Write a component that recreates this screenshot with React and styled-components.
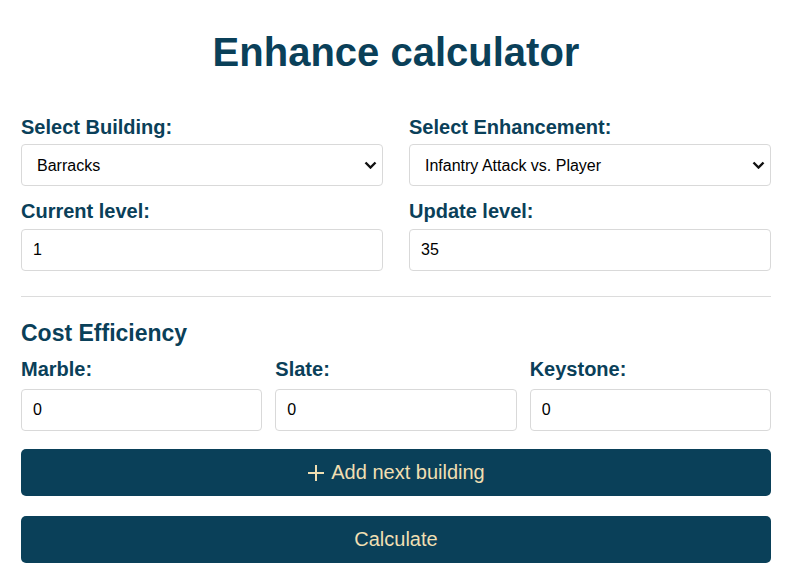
import React from 'react';
import styled, { createGlobalStyle } from 'styled-components';

const GlobalStyle = createGlobalStyle`
  body {
    margin: 0;
    background: #ffffff;
    font-family: "Liberation Sans", Arial, sans-serif;
  }
`;

const chevron = encodeURIComponent(
  '<svg xmlns="http://www.w3.org/2000/svg" width="13" height="8" viewBox="0 0 13 8"><path d="M1.5 1.5l5 5 5-5" fill="none" stroke="#111" stroke-width="2.4"/></svg>'
);

const Page = styled.div`
  padding: 0 18px 0 21px;
`;

const Title = styled.h1`
  margin: 29px 0 41px;
  line-height: 46px;
  text-align: center;
  font-size: 40px;
  font-weight: bold;
  color: #0a4059;
`;

const Grid = styled.div`
  display: grid;
  grid-template-columns: ${(p) => `repeat(${p.cols}, 1fr)`};
  column-gap: ${(p) => p.gap}px;
  row-gap: 14px;
`;

const Field = styled.div`
  display: flex;
  flex-direction: column;
`;

const Label = styled.label`
  font-size: 20px;
  line-height: 23px;
  font-weight: bold;
  color: #0a4059;
  margin-bottom: ${(p) => p.space || 6}px;
`;

const Select = styled.select`
  appearance: none;
  height: 42px;
  padding: 0 30px 0 15px;
  font-family: "Liberation Sans", Arial, sans-serif;
  font-size: 16px;
  color: #000;
  background: #fff url("data:image/svg+xml,${chevron}") no-repeat right 5px center;
  border: 1px solid #d9d9d9;
  border-radius: 4px;
`;

const Input = styled.input`
  box-sizing: border-box;
  height: 42px;
  padding: 0 11px;
  font-family: "Liberation Sans", Arial, sans-serif;
  font-size: 16px;
  color: #000;
  border: 1px solid #d9d9d9;
  border-radius: 4px;
`;

const Divider = styled.hr`
  border: none;
  border-top: 1px solid #dcdcdc;
  margin: 25px 0 23px;
`;

const Subtitle = styled.h2`
  margin: 0 0 12px;
  font-size: 23px;
  line-height: 26px;
  font-weight: bold;
  color: #0a4059;
`;

const Button = styled.button`
  display: flex;
  align-items: center;
  justify-content: center;
  gap: 6px;
  width: 100%;
  height: 47px;
  margin-top: ${(p) => p.top}px;
  border: none;
  border-radius: 5px;
  background: #0a4059;
  color: #f0dfb2;
  font-family: "Liberation Sans", Arial, sans-serif;
  font-size: 20px;
`;

const Plus = () => (
  <svg width="18" height="18" viewBox="0 0 18 18" fill="none" stroke="#f0dfb2" strokeWidth="2">
    <path d="M9 1v16M1 9h16" />
  </svg>
);

export default function App() {
  return (
    <Page>
      <GlobalStyle />
      <Title>Enhance calculator</Title>
      <Grid cols={2} gap={26}>
        <Field>
          <Label space={5}>Select Building:</Label>
          <Select defaultValue="barracks">
            <option value="barracks">Barracks</option>
          </Select>
        </Field>
        <Field>
          <Label space={5}>Select Enhancement:</Label>
          <Select defaultValue="inf">
            <option value="inf">Infantry Attack vs. Player</option>
          </Select>
        </Field>
        <Field>
          <Label>Current level:</Label>
          <Input defaultValue="1" />
        </Field>
        <Field>
          <Label>Update level:</Label>
          <Input defaultValue="35" />
        </Field>
      </Grid>
      <Divider />
      <Subtitle>Cost Efficiency</Subtitle>
      <Grid cols={3} gap={13}>
        <Field>
          <Label space={8}>Marble:</Label>
          <Input defaultValue="0" />
        </Field>
        <Field>
          <Label space={8}>Slate:</Label>
          <Input defaultValue="0" />
        </Field>
        <Field>
          <Label space={8}>Keystone:</Label>
          <Input defaultValue="0" />
        </Field>
      </Grid>
      <Button top={18}>
        <Plus />
        Add next building
      </Button>
      <Button top={20}>Calculate</Button>
    </Page>
  );
}
